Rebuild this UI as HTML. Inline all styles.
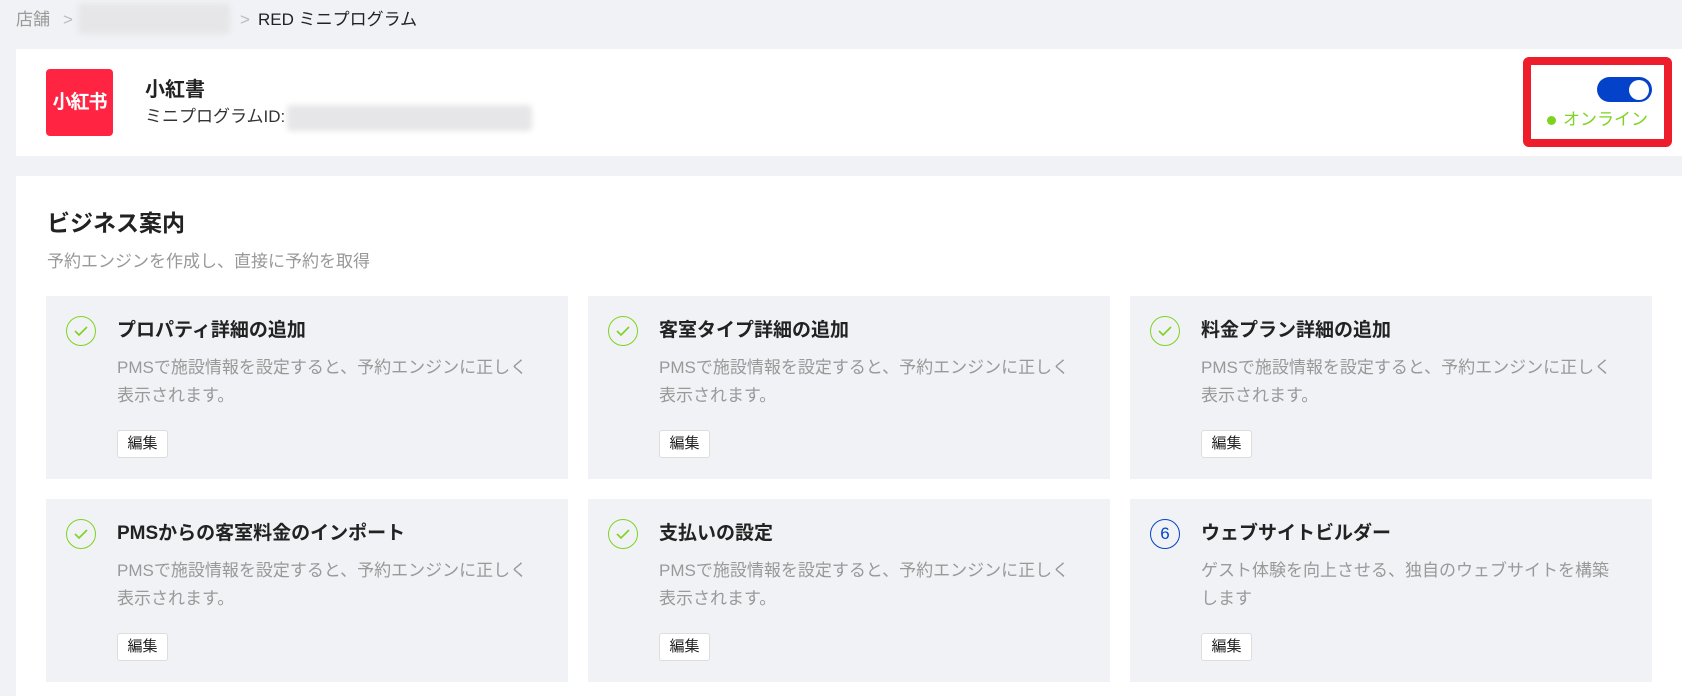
<!DOCTYPE html>
<html><head><meta charset="utf-8"><style>
*{margin:0;padding:0;box-sizing:border-box}
body{width:1682px;height:696px;overflow:hidden;background:#f0f2f5;font-family:"Liberation Sans","Noto Sans CJK JP",sans-serif;position:relative;color:#222}
.a{position:absolute}
.blur{background:#e6e6e8;filter:blur(3px);border-radius:4px}
.tile{position:absolute;width:522px;height:183px;background:#f0f2f5}
.ic{position:absolute;left:20px;top:20px;width:30px;height:30px;border:1.5px solid #7ed321;border-radius:50%}
.ic svg{position:absolute;left:6px;top:7px}
.t{position:absolute;left:71px;top:22px;font-size:19px;font-weight:bold;color:#222;line-height:26px}
.d{position:absolute;left:71px;top:58px;width:420px;font-size:17px;color:#999;line-height:28px}
.b{position:absolute;left:71px;top:134px;width:51px;height:28px;background:#fff;border:1px solid #ddd;border-radius:3px;font-size:15px;line-height:26px;text-align:center;color:#222}
</style></head><body>
<div class="a" style="left:16px;top:8px;font-size:17px;color:#999;line-height:24px">店舗</div>
<div class="a" style="left:63px;top:8px;font-size:17px;color:#bbb;line-height:24px">&gt;</div>
<div class="a blur" style="left:78px;top:4px;width:152px;height:30px"></div>
<div class="a" style="left:240px;top:8px;font-size:17px;color:#bbb;line-height:24px">&gt;</div>
<div class="a" style="left:258px;top:8px;font-size:17px;color:#222;line-height:24px">RED ミニプログラム</div>

<div class="a" style="left:16px;top:49px;width:1666px;height:107px;background:#fff"></div>
<div class="a" style="left:46px;top:69px;width:67px;height:67px;background:#ff2442;border-radius:4px;color:#fff;font-weight:bold;font-size:19px;line-height:67px;text-align:center;letter-spacing:-1px">小紅书</div>
<div class="a" style="left:145px;top:76px;font-size:20px;font-weight:bold;line-height:28px">小紅書</div>
<div class="a" style="left:145px;top:105px;font-size:17px;line-height:24px;color:#333">ミニプログラムID:</div>
<div class="a blur" style="left:287px;top:105px;width:245px;height:26px"></div>
<div class="a" style="left:1523px;top:57px;width:149px;height:90px;border:8px solid #ee1d2b;border-radius:6px"></div>
<div class="a" style="left:1597px;top:77px;width:55px;height:25px;background:#0443c9;border-radius:13px"></div>
<div class="a" style="left:1629px;top:80px;width:20px;height:20px;background:#fff;border-radius:50%"></div>
<div class="a" style="left:1547px;top:116px;width:9px;height:9px;background:#7ed321;border-radius:50%"></div>
<div class="a" style="left:1563px;top:108px;font-size:17px;color:#7ed321;line-height:24px">オンライン</div>

<div class="a" style="left:16px;top:176px;width:1666px;height:520px;background:#fff"></div>
<div class="a" style="left:47px;top:207px;font-size:23px;font-weight:bold;line-height:32px">ビジネス案内</div>
<div class="a" style="left:47px;top:250px;font-size:17px;color:#999;line-height:24px">予約エンジンを作成し、直接に予約を取得</div>

<div class="tile" style="left:46px;top:296px"><div class="ic"><svg width="16" height="14"><path d="M2 7l4 4 8-8" stroke="#7ed321" stroke-width="1.6" fill="none"/></svg></div><div class="t">プロパティ詳細の追加</div><div class="d">PMSで施設情報を設定すると、予約エンジンに正しく表示されます。</div><div class="b">編集</div></div>
<div class="tile" style="left:588px;top:296px"><div class="ic"><svg width="16" height="14"><path d="M2 7l4 4 8-8" stroke="#7ed321" stroke-width="1.6" fill="none"/></svg></div><div class="t">客室タイプ詳細の追加</div><div class="d">PMSで施設情報を設定すると、予約エンジンに正しく表示されます。</div><div class="b">編集</div></div>
<div class="tile" style="left:1130px;top:296px"><div class="ic"><svg width="16" height="14"><path d="M2 7l4 4 8-8" stroke="#7ed321" stroke-width="1.6" fill="none"/></svg></div><div class="t">料金プラン詳細の追加</div><div class="d">PMSで施設情報を設定すると、予約エンジンに正しく表示されます。</div><div class="b">編集</div></div>
<div class="tile" style="left:46px;top:499px"><div class="ic"><svg width="16" height="14"><path d="M2 7l4 4 8-8" stroke="#7ed321" stroke-width="1.6" fill="none"/></svg></div><div class="t">PMSからの客室料金のインポート</div><div class="d">PMSで施設情報を設定すると、予約エンジンに正しく表示されます。</div><div class="b">編集</div></div>
<div class="tile" style="left:588px;top:499px"><div class="ic"><svg width="16" height="14"><path d="M2 7l4 4 8-8" stroke="#7ed321" stroke-width="1.6" fill="none"/></svg></div><div class="t">支払いの設定</div><div class="d">PMSで施設情報を設定すると、予約エンジンに正しく表示されます。</div><div class="b">編集</div></div>
<div class="tile" style="left:1130px;top:499px"><div class="ic" style="border-color:#0443c9;border-width:1px;color:#0443c9;font-size:17px;text-align:center;line-height:28px">6</div><div class="t">ウェブサイトビルダー</div><div class="d">ゲスト体験を向上させる、独自のウェブサイトを構築します</div><div class="b">編集</div></div>
</body></html>
